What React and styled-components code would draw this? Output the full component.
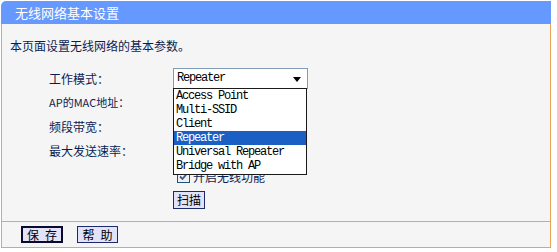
import styled, { createGlobalStyle } from "styled-components";

const GlobalStyle = createGlobalStyle`
  body {
    margin: 0;
    background: #ffffff;
    font-family: "Noto Sans CJK SC", "Liberation Sans", sans-serif;
  }
`;

const Panel = styled.div`
  width: 550px;
  margin: 1px 0 0 1px;
`;

const Header = styled.div`
  height: 23px;
  background: #6699ff;
  border-top-left-radius: 5px;
  color: #ffffff;
  font-size: 13px;
  line-height: 23px;
  padding-left: 14px;
`;

const Body = styled.div`
  background: #f5f5f5;
  border-left: 1px solid #e8a45a;
  border-right: 1px solid #e8a45a;
  border-bottom: 1px solid #e8a45a;
  height: 198px;
  padding: 14px 0 0 8px;
  box-sizing: border-box;
  color: #0c1c50;
  font-size: 12px;
`;

const Intro = styled.div`
  height: 16px;
  line-height: 16px;
  margin-bottom: 12px;
`;

const Row = styled.div`
  display: flex;
  align-items: center;
  height: ${(p) => p.h || 24}px;
`;

const Label = styled.div`
  width: 124px;
  padding-left: 39px;
  font-size: ${(p) => (p.small ? 11 : 12)}px;
`;

const Field = styled.div`
  position: relative;
  display: flex;
  align-items: center;
  gap: 3px;
`;

const Select = styled.div`
  width: 124px;
  height: 19px;
  background: #ffffff;
  border: 1px solid #7f9db9;
  display: flex;
  align-items: center;
  justify-content: space-between;
  padding: 0 6px 0 3px;
  box-sizing: content-box;
  font-family: "Liberation Mono", monospace;
  font-size: 12px;
  letter-spacing: -1.2px;
  color: #000000;
`;

const Arrow = styled.span`
  width: 0;
  height: 0;
  border-left: 4px solid transparent;
  border-right: 4px solid transparent;
  border-top: 5px solid #000000;
  margin-top: 2px;
`;

const List = styled.ul`
  position: absolute;
  top: 20px;
  left: 0;
  width: 132px;
  margin: 0;
  padding: 0 0 1px;
  list-style: none;
  background: #ffffff;
  border: 1px solid #1a1a1a;
  z-index: 2;
  font-family: "Liberation Mono", monospace;
  font-size: 12px;
  letter-spacing: -1.2px;
  color: #000000;
`;

const Option = styled.li`
  height: 14px;
  line-height: 14px;
  padding-left: 2px;
  background: ${(p) => (p.active ? "#1a5fc4" : "transparent")};
  color: ${(p) => (p.active ? "#ffffff" : "#000000")};
`;

const Check = styled.span`
  width: 11px;
  height: 11px;
  border: 1px solid #1c5180;
  background: #f0f0f0;
  margin-left: 4px;
  display: flex;
  align-items: center;
  justify-content: center;
`;

const Button = styled.button`
  font-family: "Noto Sans CJK SC", sans-serif;
  font-size: 12px;
  color: #000000;
  background: #e2e2f8;
  border: ${(p) => (p.primary ? "2px solid #0a0a30" : "1px solid #1a2a6a")};
  width: ${(p) => (p.w ? `${p.w}px` : "auto")};
  padding: 0 3px;
  height: ${(p) => p.h || 18}px;
  line-height: 14px;
  cursor: pointer;
`;

const Footer = styled.div`
  background: #f5f5f5;
  border-left: 1px solid #e8a45a;
  border-right: 1px solid #e8a45a;
  border-bottom: 1px solid #e8a45a;
  height: 25px;
  display: flex;
  align-items: center;
  gap: 14px;
  padding-left: 19px;
`;

const Gap = styled.span`
  display: inline-block;
  width: 6px;
`;

const modes = [
  "Access Point",
  "Multi-SSID",
  "Client",
  "Repeater",
  "Universal Repeater",
  "Bridge with AP",
];

const App = () => {
  return (
    <Panel>
      <GlobalStyle />
      <Header>无线网络基本设置</Header>
      <Body>
        <Intro>本页面设置无线网络的基本参数。</Intro>
        <Row>
          <Label>工作模式：</Label>
          <Field>
            <Select>
              Repeater
              <Arrow />
            </Select>
            <List>
              {modes.map((m) => (
                <Option key={m} active={m === "Repeater"}>
                  {m}
                </Option>
              ))}
            </List>
          </Field>
        </Row>
        <Row>
          <Label small>AP的MAC地址：</Label>
        </Row>
        <Row>
          <Label>频段带宽：</Label>
        </Row>
        <Row>
          <Label>最大发送速率：</Label>
        </Row>
        <Row h={28}>
          <Label />
          <Field>
            <Check>
              <svg width="9" height="9" viewBox="0 0 9 9">
                <path d="M1 4.5 L3.5 7 L8 1.5" fill="none" stroke="#3c5a8a" strokeWidth="1.8" />
              </svg>
            </Check>
            开启无线功能
          </Field>
        </Row>
        <Row h={20}>
          <Label />
          <Button>扫描</Button>
        </Row>
      </Body>
      <Footer>
        <Button primary w={42} h={17}>
          保<Gap />存
        </Button>
        <Button w={41} h={17}>
          帮<Gap />助
        </Button>
      </Footer>
    </Panel>
  );
};

export default App;
